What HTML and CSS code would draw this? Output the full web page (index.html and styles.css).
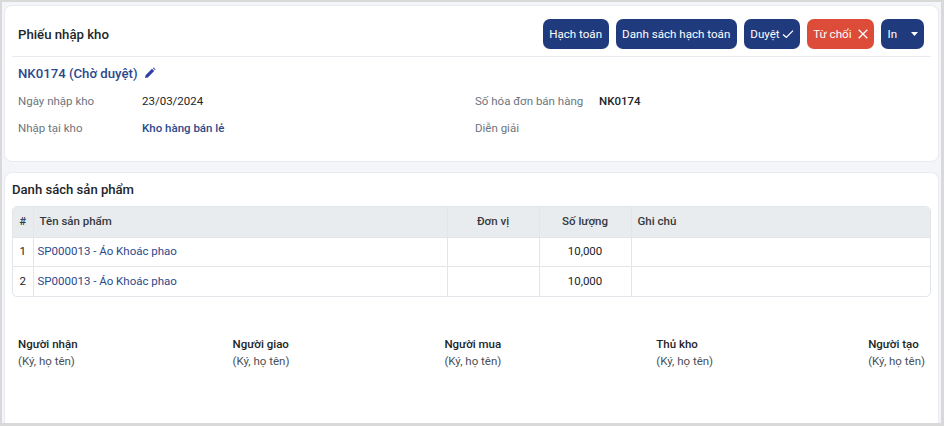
FILE: index.html
```html
<!DOCTYPE html>
<html lang="vi">
<head>
<meta charset="utf-8">
<title>Phiếu nhập kho</title>
<link rel="stylesheet" href="styles.css">
</head>
<body>
<main class="frame">
  <section class="card card-info">
    <header class="head">
      <h1 class="title">Phiếu nhập kho</h1>
      <div class="actions">
        <button class="btn">Hạch toán</button>
        <button class="btn">Danh sách hạch toán</button>
        <button class="btn btn-icon">Duyệt
          <svg width="12" height="10" viewBox="0 0 14 12"><path d="M1 6.5 L5 10 L13 2" fill="none" stroke="#fff" stroke-width="1.5"/></svg>
        </button>
        <button class="btn btn-danger">Từ chối
          <svg width="10" height="10" viewBox="0 0 10 10"><path d="M.7.7 9.3 9.3M9.3.7.7 9.3" fill="none" stroke="#fff" stroke-width="1.3"/></svg>
        </button>
        <button class="btn btn-print">In
          <svg width="7" height="4" viewBox="0 0 9 5"><path d="M0 0H9L4.5 5Z" fill="#fff"/></svg>
        </button>
      </div>
    </header>
    <div class="code-row">
      <span class="code">NK0174 (Chờ duyệt)</span>
      <svg class="pencil" width="12" height="12" viewBox="0 0 12 12"><path d="M1 11 1.6 8.2 8 1.8 10.2 4 3.8 10.4ZM8.8 1 9.6.4 11.6 2.4 11 3.2Z" fill="#2f3fa8"/></svg>
    </div>
    <div class="fields">
      <div class="field"><span class="label">Ngày nhập kho</span><span class="value">23/03/2024</span></div>
      <div class="field"><span class="label label-wide">Số hóa đơn bán hàng</span><span class="value value-strong">NK0174</span></div>
      <div class="field"><span class="label">Nhập tại kho</span><span class="value value-link">Kho hàng bán lẻ</span></div>
      <div class="field"><span class="label label-wide">Diễn giải</span></div>
    </div>
  </section>
  <section class="card card-list">
    <h2 class="subtitle">Danh sách sản phẩm</h2>
    <div class="table-wrap">
      <table class="table">
        <colgroup>
          <col class="c-idx"><col class="c-name"><col class="c-unit"><col class="c-qty"><col>
        </colgroup>
        <thead>
          <tr><th>#</th><th class="left pad-name">Tên sản phẩm</th><th>Đơn vị</th><th>Số lượng</th><th class="left">Ghi chú</th></tr>
        </thead>
        <tbody>
          <tr><td>1</td><td class="left link">SP000013 - Áo Khoác phao</td><td></td><td>10,000</td><td></td></tr>
          <tr><td>2</td><td class="left link">SP000013 - Áo Khoác phao</td><td></td><td>10,000</td><td></td></tr>
        </tbody>
      </table>
    </div>
    <div class="signs">
      <div class="sign"><strong>Người nhận</strong><span>(Ký, họ tên)</span></div>
      <div class="sign"><strong>Người giao</strong><span>(Ký, họ tên)</span></div>
      <div class="sign"><strong>Người mua</strong><span>(Ký, họ tên)</span></div>
      <div class="sign"><strong>Thủ kho</strong><span>(Ký, họ tên)</span></div>
      <div class="sign"><strong>Người tạo</strong><span>(Ký, họ tên)</span></div>
    </div>
  </section>
</main>
</body>
</html>
```
FILE: styles.css
```css
* { box-sizing: border-box; }
html, body { margin: 0; height: 100%; }
body {
  font-family: Roboto, "Noto Sans", sans-serif;
  font-size: 11.5px;
  color: #212529;
  background: #f4f5f8;
  overflow: hidden;
}
.frame {
  width: 944px;
  height: 426px;
  border: solid #d9d9d9;
  border-width: 2px 3px 3px 2px;
  padding: 3px 2px 0;
  display: flex;
  flex-direction: column;
  gap: 10px;
}
.card {
  background: #fff;
  border: 1px solid #e9ebf0;
  border-radius: 8px;
}
.card-info {
  height: 157px;
  padding: 0 7px;
  flex: none;
}
.head {
  height: 51px;
  border-bottom: 1px solid #e9ebf0;
  display: flex;
  align-items: center;
  justify-content: space-between;
  padding: 13px 7px 7px 6px;
}
.title { margin: 0; font-size: 13.2px; font-weight: 500; color: #212529; }
.actions { display: flex; gap: 7px; }
.btn {
  height: 30px;
  padding: 0 6.5px;
  border: 0;
  border-radius: 7px;
  background: #1f3a7d;
  color: #fff;
  font: 400 11.6px Roboto, sans-serif;
  display: flex;
  align-items: center;
  white-space: nowrap;
}
.btn-icon { gap: 2px; padding-right: 6px; }
.btn-danger { background: #dd4b39; gap: 6px; }
.btn-print { width: 43px; justify-content: space-between; padding-right: 6px; }
.code-row {
  display: flex;
  align-items: center;
  gap: 6px;
  padding: 5px 6px 0;
  height: 27px;
}
.code { color: #2b4a8b; font-size: 13.2px; font-weight: 500; }
.fields {
  display: grid;
  grid-template-columns: 457px 1fr;
  grid-auto-rows: 27px;
  padding: 0 6px;
  margin-top: 3px;
}
.field { display: flex; align-items: center; }
.label { width: 124px; color: #6c757d; flex: none; }
.label-wide { width: 124px; }
.value { color: #212529; }
.value-strong { font-weight: 500; }
.value-link { color: #2b4a8b; font-weight: 500; }
.card-list {
  flex: 1;
  padding: 0 7px;
  border-bottom: 0;
  border-radius: 8px 8px 0 0;
}
.subtitle { margin: 0; height: 33px; font-size: 13.1px; font-weight: 500; line-height: 33px; }
.table-wrap {
  border: 1px solid #e2e5ea;
  border-radius: 5px;
  overflow: hidden;
}
.table { width: 100%; border-collapse: collapse; table-layout: fixed; }
.c-idx { width: 20px; }
.c-name { width: 414px; }
.c-unit { width: 92px; }
.c-qty { width: 92px; }
.table th, .table td {
  border-left: 1px solid #e2e5ea;
  border-top: 1px solid #e2e5ea;
  text-align: center;
  padding: 0 6px 2px;
  font-weight: 400;
}
.table th:first-child, .table td:first-child { border-left: 0; padding: 0 0 2px; }
.table tr:first-child th { border-top: 0; }
.table th {
  height: 30px;
  background: #e9ecef;
  font-weight: 500;
  color: #343a40;
}
.table td { height: 29.5px; }
.table .left { text-align: left; }
.table .pad-name { padding-left: 6px; }
.table .link { color: #2b4a8b; padding-left: 4px; }
.signs {
  display: flex;
  justify-content: space-between;
  padding: 0 6px;
  margin-top: 40px;
}
.sign { display: flex; flex-direction: column; gap: 3px; line-height: 14px; }
.sign strong { font-weight: 500; color: #212529; }
.sign span { color: #495057; }
```
